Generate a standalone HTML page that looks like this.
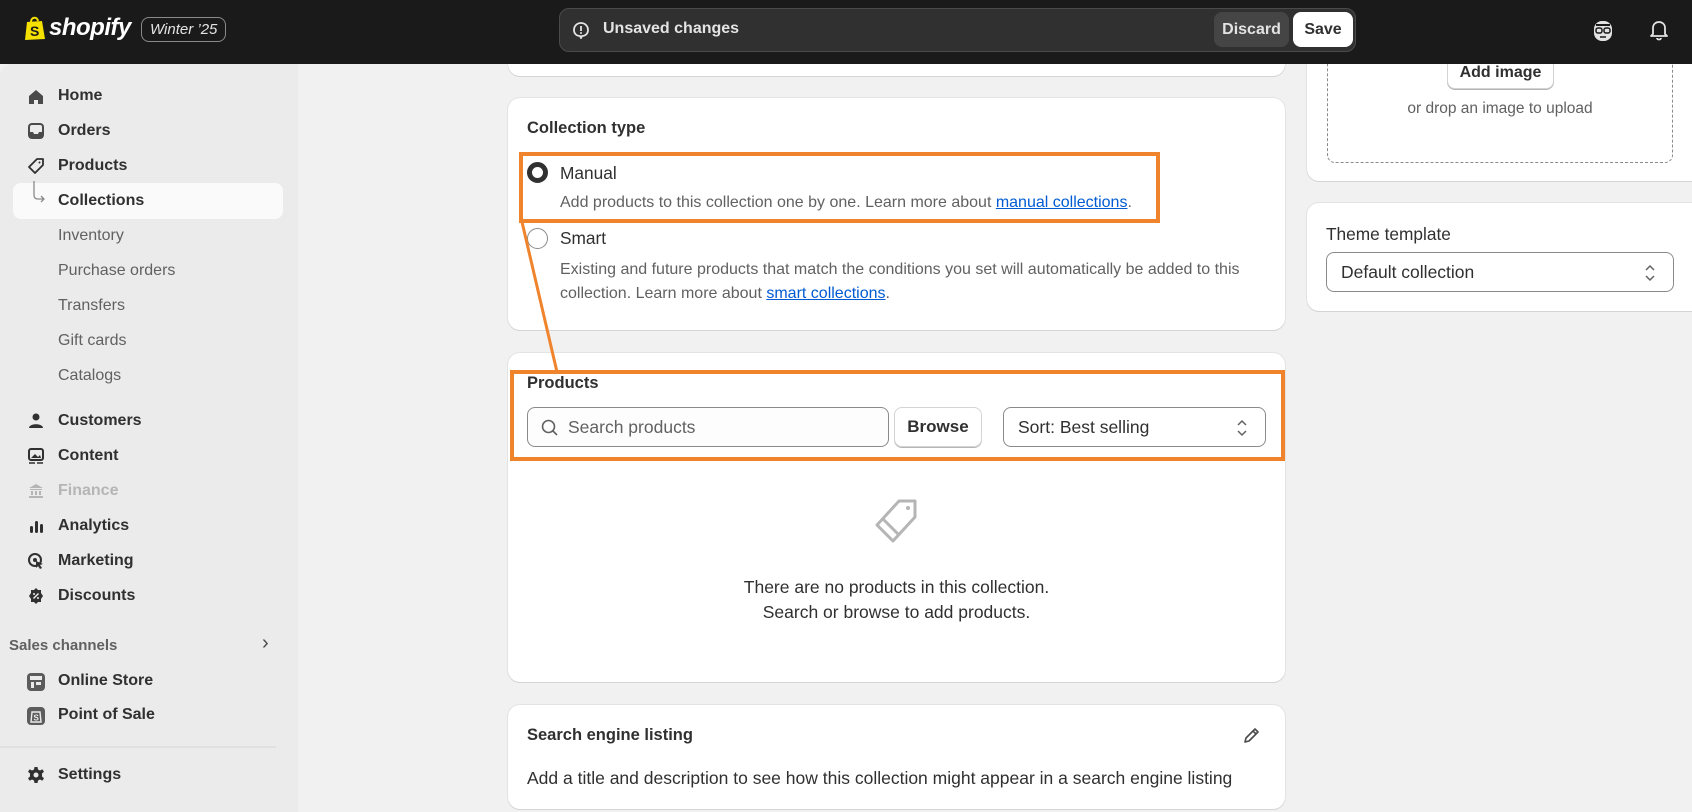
<!DOCTYPE html>
<html><head><meta charset="utf-8"><style>
*{box-sizing:border-box;margin:0;padding:0}
body{width:1692px;height:812px;overflow:hidden;background:#f1f1f1;font-family:"Liberation Sans",Arial,sans-serif;color:#303030;position:relative}
.top{position:absolute;left:0;top:0;width:1692px;height:64px;background:#1a1a1a;z-index:10}
.side{position:absolute;left:0;top:64px;width:298px;height:748px;background:#ebebeb;border-top-left-radius:12px}
.nav{position:absolute;left:58px;font-size:16px;font-weight:bold;color:#303030}
.sub{position:absolute;left:58px;font-size:16px;color:#616161}
.ic{position:absolute;left:27px;width:18px;height:18px}
.card{position:absolute;background:#fff;border-radius:12px;box-shadow:0 1px 0 #d4d4d4,0 0 0 1px #e3e3e3}
.t{position:absolute;font-size:16px}
.b{font-weight:bold}
.orange{position:absolute;border:4px solid #f0842c;z-index:5}
a{color:#005bd3;text-decoration:underline}
</style></head><body>
<div class="top">
  <svg style="position:absolute;left:24px;top:15px" width="22" height="26" viewBox="0 0 22 26"><path d="M3 7 L18 6 L21 24 L1 25 Z" fill="#f5e100"/><path d="M7 7 C7 2 13 1 14 6" stroke="#f5e100" stroke-width="2" fill="none"/><text x="6" y="21" font-size="14" font-weight="bold" fill="#1a1a1a" font-family="Liberation Sans">S</text></svg>
  <div style="position:absolute;left:49px;top:14px;color:#fff;font-size:24px;font-weight:bold;font-style:italic;letter-spacing:-0.5px">shopify</div>
  <div style="position:absolute;left:141px;top:17px;height:25px;padding:0 8px;border:1px solid #8a8a8a;border-radius:8px;color:#e3e3e3;font-size:15px;font-style:italic;line-height:23px">Winter ’25</div>
  <div style="position:absolute;left:559px;top:8px;width:797px;height:44px;background:#303030;border:1px solid #4a4a4a;border-radius:10px">
    <svg style="position:absolute;left:12px;top:12px" width="18" height="18" viewBox="0 0 18 18"><path d="M9 2 C13 2 16 5 16 9 C16 13 13 15 10 15 L9 17 L8 15 C5 15 2 13 2 9 C2 5 5 2 9 2Z" fill="none" stroke="#e3e3e3" stroke-width="1.8"/><rect x="8.1" y="5" width="1.8" height="5" fill="#e3e3e3"/><circle cx="9" cy="12" r="1" fill="#e3e3e3"/></svg>
    <div style="position:absolute;left:43px;top:11px;color:#e3e3e3;font-size:16px;font-weight:bold">Unsaved changes</div>
    <div style="position:absolute;left:654px;top:3px;width:75px;height:35px;background:#454545;border-radius:8px;color:#e3e3e3;font-size:16px;font-weight:bold;text-align:center;line-height:35px">Discard</div>
    <div style="position:absolute;left:733px;top:3px;width:60px;height:35px;background:#fff;border-radius:8px;color:#303030;font-size:16px;font-weight:bold;text-align:center;line-height:35px">Save</div>
  </div>
  <svg style="position:absolute;left:1592px;top:19px" width="22" height="24" viewBox="0 0 22 24"><rect x="2" y="2" width="18" height="20" rx="8" fill="#e3e3e3"/><rect x="4" y="9" width="6" height="5" rx="2" fill="none" stroke="#1a1a1a" stroke-width="1.5"/><rect x="12" y="9" width="6" height="5" rx="2" fill="none" stroke="#1a1a1a" stroke-width="1.5"/><path d="M4 6 L18 6" stroke="#1a1a1a" stroke-width="2"/><path d="M8 18 L14 18" stroke="#1a1a1a" stroke-width="1.5"/></svg>
  <svg style="position:absolute;left:1648px;top:18px" width="22" height="24" viewBox="0 0 22 24"><path d="M5 16 L5 10 C5 6 8 4 11 4 C14 4 17 6 17 10 L17 16 L19 18 L3 18 Z" fill="none" stroke="#e3e3e3" stroke-width="1.8" stroke-linejoin="round"/><path d="M9 20 C9 22 13 22 13 20" fill="none" stroke="#e3e3e3" stroke-width="1.8"/></svg>
</div>

<div class="side">
  <div style="position:absolute;left:13px;top:119px;width:270px;height:36px;background:#fafafa;border-radius:8px"></div>
  <svg style="position:absolute;left:33px;top:117px" width="14" height="22"><path d="M1 0 L1 14 Q1 18 5 18 L11 18 M8 15 L11 18 L8 21" fill="none" stroke="#8a8a8a" stroke-width="1.3"/></svg>
</div>
<svg class="ic" style="top:88px" viewBox="0 0 18 18"><path d="M2 8 L9 2 L16 8 L16 16 L11 16 L11 12 L7 12 L7 16 L2 16Z" fill="#4a4a4a"/></svg>
<div class="nav" style="top:87px">Home</div>
<svg class="ic" style="top:122px" viewBox="0 0 18 18"><rect x="2" y="2" width="14" height="14" rx="3" fill="none" stroke="#4a4a4a" stroke-width="2"/><path d="M2 10 L6 10 L7 12 L11 12 L12 10 L16 10 L16 16 L2 16Z" fill="#4a4a4a"/></svg>
<div class="nav" style="top:122px">Orders</div>
<svg class="ic" style="top:157px" viewBox="0 0 18 18"><path d="M10 2 L16 2 L16 8 L8 16 L2 10 Z" fill="none" stroke="#303030" stroke-width="1.8" stroke-linejoin="round"/><circle cx="12.5" cy="5.5" r="1" fill="#303030"/></svg>
<div class="nav" style="top:157px">Products</div>
<div class="nav" style="top:192px">Collections</div>
<div class="sub" style="top:227px">Inventory</div>
<div class="sub" style="top:262px">Purchase orders</div>
<div class="sub" style="top:297px">Transfers</div>
<div class="sub" style="top:332px">Gift cards</div>
<div class="sub" style="top:367px">Catalogs</div>
<svg class="ic" style="top:412px" viewBox="0 0 18 18"><circle cx="9" cy="5" r="3.5" fill="#303030"/><path d="M2 16 C2 11 16 11 16 16Z" fill="#303030"/></svg>
<div class="nav" style="top:412px">Customers</div>
<svg class="ic" style="top:447px" viewBox="0 0 18 18"><rect x="2" y="2" width="14" height="11" rx="2" fill="none" stroke="#303030" stroke-width="2"/><path d="M4 11 L8 7 L11 10 L13 8 L14 11Z" fill="#303030"/><path d="M2 16 L8 16 M10 16 L16 16" stroke="#303030" stroke-width="1.5"/></svg>
<div class="nav" style="top:447px">Content</div>
<svg class="ic" style="top:482px" viewBox="0 0 18 18"><path d="M2 6 L9 2 L16 6Z M3 7 L15 7 L15 8 L3 8Z M4 9 L6 9 L6 13 L4 13Z M8 9 L10 9 L10 13 L8 13Z M12 9 L14 9 L14 13 L12 13Z M2 14 L16 14 L16 16 L2 16Z" fill="#b5b5b5"/></svg>
<div class="nav" style="top:482px;color:#b5b5b5">Finance</div>
<svg class="ic" style="top:517px" viewBox="0 0 18 18"><rect x="3" y="9" width="3" height="7" rx="1.5" fill="#303030"/><rect x="8" y="4" width="3" height="12" rx="1.5" fill="#303030"/><rect x="13" y="7" width="3" height="9" rx="1.5" fill="#303030"/></svg>
<div class="nav" style="top:517px">Analytics</div>
<svg class="ic" style="top:552px" viewBox="0 0 18 18"><circle cx="8" cy="8" r="6" fill="none" stroke="#303030" stroke-width="2"/><circle cx="8" cy="8" r="2" fill="#303030"/><path d="M9 9 L16 12 L13 13 L15 16 L13 17 L11 14 L9 16Z" fill="#303030"/></svg>
<div class="nav" style="top:552px">Marketing</div>
<svg class="ic" style="top:587px" viewBox="0 0 18 18"><path d="M9 1 L11 3 L14 3 L14 6 L16 9 L14 12 L14 15 L11 15 L9 17 L7 15 L4 15 L4 12 L2 9 L4 6 L4 3 L7 3Z" fill="#303030"/><path d="M6.5 11.5 L11.5 6.5" stroke="#ebebeb" stroke-width="1.5"/><circle cx="7" cy="7" r="1" fill="#ebebeb"/><circle cx="11" cy="11" r="1" fill="#ebebeb"/></svg>
<div class="nav" style="top:587px">Discounts</div>
<div style="position:absolute;left:9px;top:637px;font-size:15px;font-weight:bold;color:#616161">Sales channels</div>
<div style="position:absolute;left:262px;top:632px;font-size:20px;color:#4a4a4a">›</div>
<svg class="ic" style="top:672px;width:20px;height:20px;left:26px" viewBox="0 0 20 20"><rect x="1" y="1" width="18" height="18" rx="4" fill="#5c5c5c"/><rect x="4" y="4" width="12" height="4" fill="#ebebeb"/><rect x="5" y="10" width="3" height="6" fill="#ebebeb"/><rect x="10" y="10" width="5" height="3" fill="#ebebeb"/></svg>
<div class="nav" style="top:672px">Online Store</div>
<svg class="ic" style="top:706px;width:20px;height:20px;left:26px" viewBox="0 0 20 20"><rect x="1" y="1" width="18" height="18" rx="4" fill="#5c5c5c"/><path d="M6 6 L14 6 L15 16 L5 16Z" fill="none" stroke="#ebebeb" stroke-width="1.4"/><text x="7.5" y="14.5" font-size="8" fill="#ebebeb" font-family="Liberation Sans" font-weight="bold">S</text></svg>
<div class="nav" style="top:706px">Point of Sale</div>
<div style="position:absolute;left:0;top:746px;width:276px;height:2px;background:#e0e0e0"></div>
<svg class="ic" style="top:766px" viewBox="0 0 18 18"><path d="M7.5 1 L10.5 1 L11 3.5 L13 4.5 L15.3 3.3 L17 5.8 L15 7.5 L15 10.5 L17 12.2 L15.3 14.7 L13 13.5 L11 14.5 L10.5 17 L7.5 17 L7 14.5 L5 13.5 L2.7 14.7 L1 12.2 L3 10.5 L3 7.5 L1 5.8 L2.7 3.3 L5 4.5 L7 3.5Z" fill="#303030"/><circle cx="9" cy="9" r="2.5" fill="#ebebeb"/></svg>
<div class="nav" style="top:766px">Settings</div>

<div class="card" style="left:508px;top:40px;width:777px;height:36px"></div>
<div class="card" style="left:508px;top:98px;width:777px;height:232px">
  <div class="t b" style="left:19px;top:21px;font-size:16.5px">Collection type</div>
  <div style="position:absolute;left:19px;top:64px;width:21px;height:21px;border-radius:50%;border:5.5px solid #303030;background:#fff"></div>
  <div class="t" style="left:52px;top:65px;font-size:17.3px">Manual</div>
  <div class="t" style="left:52px;top:96px;color:#616161">Add products to this collection one by one. Learn more about <a>manual collections</a>.</div>
  <div style="position:absolute;left:19px;top:130px;width:21px;height:21px;border-radius:50%;border:1.5px solid #8a8a8a;background:#fff"></div>
  <div class="t" style="left:52px;top:130px;font-size:17.3px">Smart</div>
  <div class="t" style="left:52px;top:160px;color:#616161;line-height:24px">Existing and future products that match the conditions you set will automatically be added to this<br>collection. Learn more about <a>smart collections</a>.</div>
</div>
<div class="card" style="left:508px;top:353px;width:777px;height:329px">
  <div class="t b" style="left:19px;top:21px;font-size:16.5px">Products</div>
  <div style="position:absolute;left:19px;top:54px;width:362px;height:40px;border:1px solid #8a8a8a;border-radius:8px;background:#fdfdfd">
    <svg style="position:absolute;left:12px;top:10px" width="20" height="20" viewBox="0 0 20 20"><circle cx="8.5" cy="8.5" r="6" fill="none" stroke="#616161" stroke-width="1.6"/><path d="M13 13 L17 17" stroke="#616161" stroke-width="1.6"/></svg>
    <div class="t" style="left:40px;top:9px;font-size:17.5px;color:#616161">Search products</div>
  </div>
  <div style="position:absolute;left:386px;top:54px;width:88px;height:40px;border:1px solid #d4d4d4;border-radius:8px;box-shadow:0 1px 0 #b5b5b5;font-size:17px;font-weight:bold;text-align:center;line-height:38px">Browse</div>
  <div style="position:absolute;left:495px;top:54px;width:263px;height:40px;border:1px solid #8a8a8a;border-radius:8px">
    <div class="t" style="left:14px;top:9px;font-size:17.5px">Sort: Best selling</div>
    <svg style="position:absolute;left:232px;top:11px" width="12" height="18" viewBox="0 0 12 18"><path d="M2 6 L6 2 L10 6 M2 12 L6 16 L10 12" fill="none" stroke="#616161" stroke-width="1.5"/></svg>
  </div>
  <svg style="position:absolute;left:365px;top:144px" width="48" height="48" viewBox="0 0 48 48"><path d="M26 4 L42 4 L42 20 L20 44 L4 28Z" fill="none" stroke="#b5b5b5" stroke-width="3" stroke-linejoin="round"/><path d="M10 22 L26 38" stroke="#b5b5b5" stroke-width="3"/><circle cx="35" cy="11" r="2" fill="#b5b5b5"/></svg>
  <div class="t" style="left:0;width:777px;text-align:center;top:222px;font-size:17.5px;line-height:25px">There are no products in this collection.<br>Search or browse to add products.</div>
</div>
<div class="card" style="left:508px;top:705px;width:777px;height:104px">
  <div class="t b" style="left:19px;top:21px;font-size:16.5px">Search engine listing</div>
  <svg style="position:absolute;left:734px;top:20px" width="20" height="20" viewBox="0 0 20 20"><path d="M3 17 L4 13 L13 4 L16 7 L7 16Z M11 6 L14 9" fill="none" stroke="#4a4a4a" stroke-width="1.6" stroke-linejoin="round"/></svg>
  <div class="t" style="left:19px;top:63px;font-size:17.5px">Add a title and description to see how this collection might appear in a search engine listing</div>
</div>

<div class="card" style="left:1307px;top:20px;width:400px;height:161px">
  <div style="position:absolute;left:20px;top:-10px;width:346px;height:153px;border:1px dashed #8a8a8a;border-radius:8px"></div>
  <div style="position:absolute;left:140px;top:36px;width:107px;height:33px;border:1px solid #d4d4d4;border-radius:8px;background:#fff;box-shadow:0 1px 0 #b5b5b5;font-size:16px;font-weight:bold;text-align:center;line-height:31px">Add image</div>
  <div class="t" style="left:20px;width:346px;text-align:center;top:80px;color:#616161;font-size:15.5px">or drop an image to upload</div>
</div>
<div class="card" style="left:1307px;top:203px;width:400px;height:108px">
  <div class="t" style="left:19px;top:21px;font-size:17.3px">Theme template</div>
  <div style="position:absolute;left:19px;top:49px;width:348px;height:40px;border:1px solid #8a8a8a;border-radius:8px">
    <div class="t" style="left:14px;top:9px;font-size:17.5px">Default collection</div>
    <svg style="position:absolute;left:317px;top:11px" width="12" height="18" viewBox="0 0 12 18"><path d="M2 6 L6 2 L10 6 M2 12 L6 16 L10 12" fill="none" stroke="#616161" stroke-width="1.5"/></svg>
  </div>
</div>

<div class="orange" style="left:519px;top:152px;width:641px;height:71px"></div>
<div class="orange" style="left:510px;top:370px;width:775px;height:91px"></div>
<svg style="position:absolute;left:515px;top:220px;z-index:5" width="50" height="155"><path d="M7 2 L42 152" stroke="#f0842c" stroke-width="3"/></svg>
</body></html>
